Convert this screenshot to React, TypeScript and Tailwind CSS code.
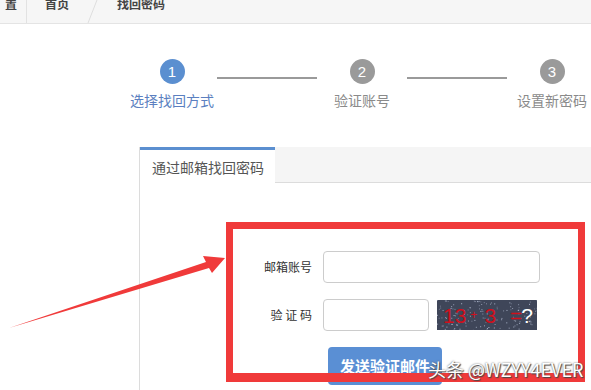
import React from "react";

const font = { fontFamily: '"Noto Sans CJK SC", "Liberation Sans", sans-serif' };

// deterministic speckles for the captcha picture
const dots = Array.from({ length: 140 }, (_, i) => {
  const a = Math.sin(i * 12.9898) * 43758.5453;
  const b = Math.sin(i * 78.233) * 12345.6789;
  return { x: (a - Math.floor(a)) * 100, y: (b - Math.floor(b)) * 30, o: 0.35 + ((i * 7) % 10) / 20 };
});

function Step({ n, label, active }: { n: number; label: string; active?: boolean }): React.ReactElement {
  return (
    <div className="flex w-[90px] shrink-0 flex-col items-center">
      <div
        className={
          "flex h-[25px] w-[25px] items-center justify-center rounded-full text-[15px] leading-none text-white " +
          (active ? "bg-[#5b8fd0]" : "bg-[#9a9a9a]")
        }
        style={{ fontFamily: '"Liberation Sans", sans-serif' }}
      >
        {n}
      </div>
      <div className={"mt-[8px] whitespace-nowrap text-[14px] leading-[16px] " + (active ? "text-[#5b7fc0]" : "text-[#8a8a8a]")}>
        {label}
      </div>
    </div>
  );
}

function Captcha(): React.ReactElement {
  return (
    <div className="relative ml-[8px] flex h-[30px] w-[100px] items-center overflow-hidden bg-[#3f4659]">
      <svg className="absolute inset-0" width="100" height="30">
        {dots.map((d, i) => (
          <rect key={i} x={d.x} y={d.y} width="1" height="1" fill="#c9d3ea" opacity={d.o} />
        ))}
      </svg>
      <div className="relative flex items-center text-[21px] leading-none" style={{ fontFamily: '"Liberation Sans", sans-serif' }}>
        <span className="ml-[6px] text-[#d0101c]">13</span>
        <span className="ml-[4px] text-[12px] text-[#d0101c]">+</span>
        <span className="ml-[7px] text-[#d0101c]">3</span>
        <span className="ml-[14px] text-[#d0101c]">=</span>
        <span className="-ml-[1px] text-white">?</span>
      </div>
    </div>
  );
}

export default function App(): React.ReactElement {
  return (
    <div className="relative h-[390px] w-[591px] overflow-hidden bg-white" style={font}>
      {/* breadcrumb */}
      <div className="flex h-[24px] items-start border-b border-[#e4e4e4] bg-[#f6f6f6] text-[12px] font-bold leading-[12px] text-[#444]">
        <div className="h-full w-[27px] border-r border-[#e2e2e2] pl-[5px]">
          <span className="-mt-[2px] block">置</span>
        </div>
        <span className="-mt-[2px] ml-[18px] block">首页</span>
        <svg className="ml-[17px]" width="14" height="23">
          <line x1="11" y1="0" x2="2" y2="23" stroke="#dedede" strokeWidth="1" />
        </svg>
        <span className="-mt-[2px] ml-[17px] block">找回密码</span>
      </div>

      {/* steps */}
      <div className="mt-[35px] flex pl-[127px]">
        <Step n={1} label="选择找回方式" active />
        <div className="mt-[18px] h-[2px] w-[100px] shrink-0 bg-[#9a9a9a]" />
        <Step n={2} label="验证账号" />
        <div className="mt-[18px] h-[2px] w-[100px] shrink-0 bg-[#9a9a9a]" />
        <Step n={3} label="设置新密码" />
      </div>

      {/* panel */}
      <div className="ml-[139px] mt-[39px] h-[260px] border-l border-[#dcdcdc]">
        <div className="flex h-[36px]">
          <div className="w-[135px] border-t-[3px] border-[#5b8fd0] pl-[12px] pt-[8px] text-[14px] leading-[18px] text-[#555]">
            通过邮箱找回密码
          </div>
          <div className="flex-1 border-b border-[#dcdcdc] bg-[#f5f5f5]" />
        </div>

        <div className="pt-[68px] text-[12px] text-[#333]">
          <div className="flex items-center">
            <div className="w-[173px] pr-[1px] text-right">邮箱账号</div>
            <div className="ml-[10px] h-[32px] w-[217px] rounded-[4px] border border-[#cccccc] bg-white" />
          </div>
          <div className="mt-[16px] flex items-center">
            <div className="w-[173px] whitespace-pre pr-[1px] text-right">验 证 码</div>
            <div className="ml-[10px] h-[32px] w-[106px] rounded-[4px] border border-[#cccccc] bg-white" />
            <Captcha />
          </div>
          <div className="mt-[16px] pl-[188px]">
            <button className="h-[38px] w-[114px] rounded-[4px] bg-[#5a8fd4] text-[15px] font-bold text-white">
              发送验证邮件
            </button>
          </div>
        </div>
      </div>

      {/* annotation: red box */}
      <div className="pointer-events-none absolute left-[226px] top-[222px] h-[160px] w-[359px] border-[7px] border-b-[9px] border-[#f03a3a]" />

      {/* annotation: arrow */}
      <svg className="pointer-events-none absolute left-0 top-0" width="591" height="390">
        <polygon points="9,328 206,262 203,256 225,258 212,273 209,268" fill="#f03a3a" />
      </svg>

      {/* watermark */}
      <div
        className="pointer-events-none absolute left-[428px] top-[359px] whitespace-nowrap text-[18px] leading-[20px] text-white"
        style={{ textShadow: "0 0 2px #555, 1px 1px 1px #444" }}
      >
        头条 @WZYY4EVER
      </div>
    </div>
  );
}
